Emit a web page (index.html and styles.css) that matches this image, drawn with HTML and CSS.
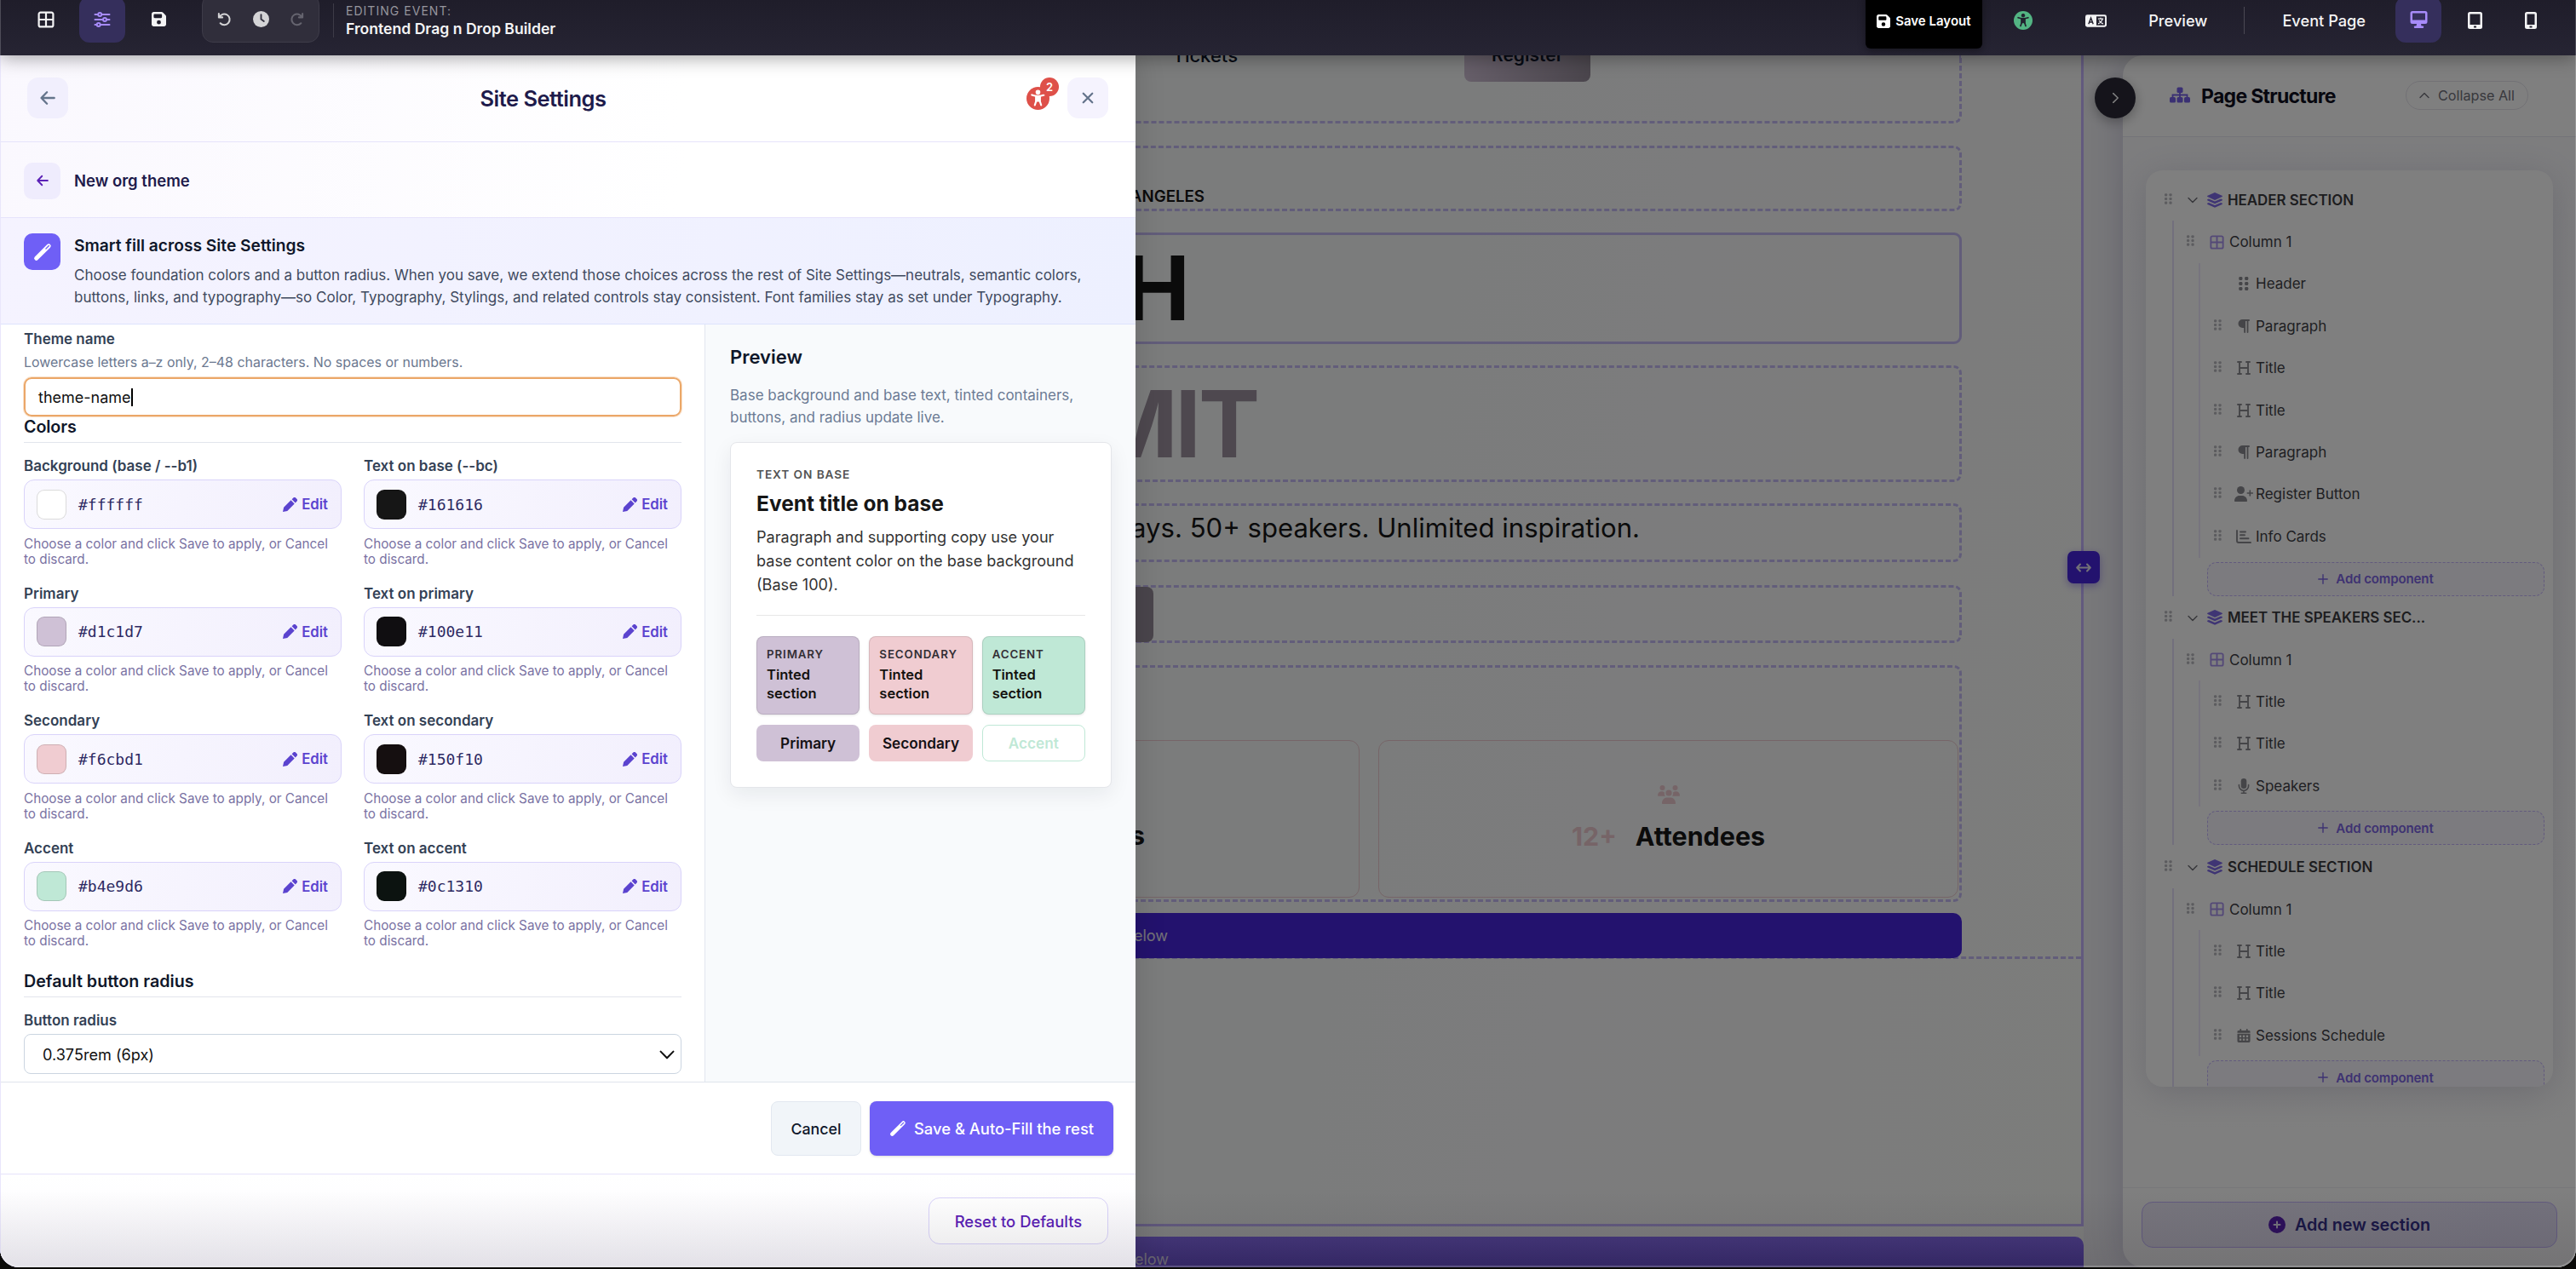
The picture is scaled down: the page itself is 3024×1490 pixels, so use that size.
FILE: index.html
```
<!doctype html>
<html lang="en">
<head>
	<meta charset="UTF-8" />
	<title>Frontend Drag n Drop Builder</title>
	<link rel="stylesheet" href="styles.css">
</head>
<body>
	<!--icons-->
	<svg class="sprite" xmlns="http://www.w3.org/2000/svg">
		<symbol id="i-grid" viewBox="0 0 20 20"><path fill="none" stroke="currentColor" stroke-width="2.2" d="M3.6 1.6h12.8a2 2 0 0 1 2 2v12.8a2 2 0 0 1-2 2H3.6a2 2 0 0 1-2-2V3.600a2 2 0 0 1 2-2zM10 2v16M2 10h16"/></symbol>
		<symbol id="i-sliders" viewBox="0 0 20 20"><g fill="none" stroke="currentColor" stroke-width="2" stroke-linecap="round"><path d="M1.500 4h3.500M9.500 4h9M1.500 10h8.500M15.500 10h3M1.500 16h2M8 16h10.500"/><circle cx="7.200" cy="4" r="2"/><circle cx="13" cy="10" r="2"/><circle cx="5.700" cy="16" r="2"/></g></symbol>
		<symbol id="i-save" viewBox="0 32 448 448"><path fill="currentColor" d="M64 32C28.700 32 0 60.700 0 96v320c0 35.300 28.700 64 64 64h320c35.300 0 64-28.700 64-64V173.300c0-17-6.700-33.300-18.700-45.300L352 50.700C340 38.700 323.700 32 306.700 32H64zm0 96c0-17.700 14.300-32 32-32h192c17.700 0 32 14.300 32 32v64c0 17.700-14.300 32-32 32H96c-17.700 0-32-14.300-32-32v-64zm160 160a64 64 0 1 1 0 128 64 64 0 1 1 0-128z"/></symbol>
		<symbol id="i-undo" viewBox="0 0 20 20"><path fill="none" stroke="currentColor" stroke-width="2.400" stroke-linecap="round" stroke-linejoin="round" d="M2.200 2.500v5h5M3 7a7.500 7.500 0 1 1 1.300 8.600"/></symbol>
		<symbol id="i-clock" viewBox="0 0 20 20"><circle cx="10" cy="10" r="10" fill="currentColor"/><path fill="none" stroke="#33323f" stroke-width="2" stroke-linecap="round" d="M10 4.500V10l3.500 2.600"/></symbol>
		<symbol id="i-back" viewBox="0 0 20 20"><path fill="none" stroke="currentColor" stroke-width="2.600" stroke-linecap="round" stroke-linejoin="round" d="M18.500 10H2M9 2.500L1.700 10 9 17.500"/></symbol>
		<symbol id="i-x" viewBox="0 0 20 20"><path fill="none" stroke="currentColor" stroke-width="3.200" stroke-linecap="round" d="M2.500 2.500l15 15M17.500 2.500l-15 15"/></symbol>
		<symbol id="i-access" viewBox="0 0 24 24"><circle cx="12" cy="12" r="12" fill="currentColor"/><g class="man"><circle cx="12" cy="5.600" r="2"/><path d="M5.600 8.400c4 1.500 8.800 1.500 12.800 0M12 10v4M10.200 10v4.500L8.700 19M13.800 10v4.500l1.500 4.500" fill="none" stroke-width="1.900" stroke-linecap="round"/><path d="M9.600 9.500h4.800v5.500H9.600z"/></g></symbol>
		<symbol id="i-wand" viewBox="0 0 24 24"><path fill="none" stroke="currentColor" stroke-width="5.500" stroke-linecap="round" d="M4 20L19.800 4.200"/><path stroke="#6f5ff6" stroke-width="1.400" stroke-linecap="round" d="M16.300 7.700l3.800-3.800"/></symbol>
		<symbol id="i-pencil" viewBox="0 0 20 20"><path fill="currentColor" d="M0 20l1.300-6.200L11.200 3.900l4.900 4.900L6.200 18.700zM12.400 2.700l1.900-1.900a2.600 2.600 0 0 1 3.700 0l1.200 1.200a2.600 2.600 0 0 1 0 3.700l-1.900 1.900z"/></symbol>
		<symbol id="i-down" viewBox="0 0 20 12"><path fill="none" stroke="currentColor" stroke-width="2.300" stroke-linecap="round" stroke-linejoin="round" d="M1.700 1.700L10 10.200l8.300-8.500"/></symbol>
		<symbol id="i-lang" viewBox="0 0 26 15"><rect width="26" height="15" rx="2.500" fill="currentColor"/><path fill="#24222f" d="M13.500 2h9.500a1 1 0 0 1 1 1v9a1 1 0 0 1-1 1h-9.500z"/><path fill="none" stroke="#24222f" stroke-width="1.500" d="M4 11.500L6.800 4l2.800 7.500M5 9h3.600"/><path fill="none" stroke="currentColor" stroke-width="1.300" d="M15.500 5h6.500M18.700 3.500V5M21 5c-.8 3-3 5-5.300 6M16.800 7c1 2 2.800 3.500 5 4"/></symbol>
		<symbol id="i-desktop" viewBox="0 0 20 20"><path fill="currentColor" fill-rule="evenodd" d="M2.500 0h15A2.500 2.500 0 0 1 20 2.500v10a2.500 2.500 0 0 1-2.500 2.500h-5l.5 2.500h1.500a1.200 1.200 0 0 1 0 2.500h-9a1.200 1.200 0 0 1 0-2.500H7l.5-2.500h-5A2.500 2.500 0 0 1 0 12.500v-10A2.500 2.500 0 0 1 2.500 0zM2.500 2.500v8h15v-8z"/></symbol>
		<symbol id="i-tablet" viewBox="0 0 17 20"><path fill="currentColor" fill-rule="evenodd" d="M2.500 0h12A2.500 2.500 0 0 1 17 2.500v15a2.500 2.500 0 0 1-2.500 2.500h-12A2.500 2.500 0 0 1 0 17.500v-15A2.500 2.500 0 0 1 2.500 0zM2.500 2.500v12.500h12V2.500zM7 16.500v2h3v-2z"/></symbol>
		<symbol id="i-mobile" viewBox="0 0 14 20"><path fill="currentColor" fill-rule="evenodd" d="M2.500 0h9A2.500 2.500 0 0 1 14 2.500v15a2.500 2.500 0 0 1-2.500 2.500h-9A2.500 2.500 0 0 1 0 17.500v-15A2.500 2.500 0 0 1 2.500 0zM2.500 2.500v12.500h9V2.500zM5.500 16.500v2h3v-2z"/></symbol>
		<symbol id="i-sitemap" viewBox="0 0 24 18"><g fill="currentColor"><rect x="8.500" width="7" height="6.500" rx="1.600"/><rect y="11.500" width="7" height="6.500" rx="1.600"/><rect x="8.500" y="11.500" width="7" height="6.500" rx="1.600"/><rect x="17" y="11.500" width="7" height="6.500" rx="1.600"/></g><path fill="none" stroke="currentColor" stroke-width="1.800" d="M12 6v6M3.500 12V9h17v3"/></symbol>
		<symbol id="i-grip" viewBox="0 0 10 14"><g fill="currentColor"><rect width="3.600" height="3.600" rx="1.200"/><rect x="6" width="3.600" height="3.600" rx="1.200"/><rect y="5.200" width="3.600" height="3.600" rx="1.200"/><rect x="6" y="5.200" width="3.600" height="3.600" rx="1.200"/><rect y="10.400" width="3.600" height="3.600" rx="1.200"/><rect x="6" y="10.400" width="3.600" height="3.600" rx="1.200"/></g></symbol>
		<symbol id="i-layers" viewBox="0 0 18 18"><path fill="currentColor" d="M9 0l8.500 3.800c.6.300.6 1 0 1.300L9 9 .5 5.100c-.6-.3-.6-1 0-1.300zM2 7.400l7 3.200 7-3.200 1.500.7c.6.300.6 1 0 1.300L9 13.300.5 9.400c-.6-.3-.6-1 0-1.300zM2 11.900l7 3.200 7-3.200 1.500.7c.6.300.6 1 0 1.300L9 17.800.5 13.900c-.6-.3-.6-1 0-1.300z"/></symbol>
		<symbol id="i-h" viewBox="0 0 16 16"><path fill="none" stroke="currentColor" stroke-width="1.900" stroke-linecap="round" d="M1 1h4M11 1h4M1 15h4M11 15h4M3 1v14M13 1v14M3 8h10"/></symbol>
		<symbol id="i-para" viewBox="0 0 14 16"><path fill="currentColor" d="M5.500 0H13a1 1 0 0 1 0 2h-.6v13a.9.900 0 0 1-1.800 0V2H9v13a.9.900 0 0 1-1.800 0v-5H5.500a5 5 0 0 1 0-10z"/></symbol>
		<symbol id="i-user" viewBox="0 0 22 18"><g fill="currentColor"><circle cx="7.500" cy="4.500" r="4.500"/><path d="M0 17.200C0 13.500 2.800 11 6 11h3c3.300 0 6 2.500 6 6.200 0 .5-.3.800-.8.800H.8c-.5 0-.8-.3-.8-.8z"/></g><path stroke="currentColor" stroke-width="1.600" stroke-linecap="round" d="M15.300 8h6M18.300 5v6"/></symbol>
		<symbol id="i-chart" viewBox="0 0 18 16"><path fill="none" stroke="currentColor" stroke-width="1.900" stroke-linecap="round" d="M1 1v12a2 2 0 0 0 2 2h14M5 2.500h6M5 6.300h5M5 10.200h9.500"/></symbol>
		<symbol id="i-mic" viewBox="0 0 13 18"><rect x="3.200" width="6.600" height="12" rx="3.300" fill="currentColor"/><path fill="none" stroke="currentColor" stroke-width="1.600" stroke-linecap="round" d="M.9 7.500v1.200a5.600 5.600 0 0 0 11.200 0V7.500M6.500 14.500v2.600M3.800 17.200h5.400"/></symbol>
		<symbol id="i-cal" viewBox="0 0 16 17"><path fill="currentColor" fill-rule="evenodd" d="M4 0a1 1 0 0 1 1 1v1h6V1a1 1 0 0 1 2 0v1h1.500A1.500 1.500 0 0 1 16 3.500V5H0V3.500A1.500 1.500 0 0 1 1.500 2H3V1a1 1 0 0 1 1-1zM0 6h16v9.500a1.500 1.500 0 0 1-1.500 1.500h-13A1.500 1.500 0 0 1 0 15.500zM2.500 8v2.500H5V8zM6.800 8v2.500h2.500V8zM11 8v2.500h2.500V8zM2.500 12.200v2.500H5v-2.500zM6.800 12.200v2.500h2.500v-2.500zM11 12.200v2.500h2.500v-2.500z"/></symbol>
		<symbol id="i-plus" viewBox="0 0 12 12"><path stroke="currentColor" stroke-width="1.400" stroke-linecap="round" d="M6 .8v10.400M.8 6h10.400"/></symbol>
		<symbol id="i-pluscircle" viewBox="0 0 20 20"><circle cx="10" cy="10" r="10" fill="currentColor"/><path stroke="#e8e4f8" stroke-width="2" stroke-linecap="round" d="M10 6.500v7M6.500 10h7"/></symbol>
		<symbol id="i-resize" viewBox="0 0 20 12"><path fill="none" stroke="currentColor" stroke-width="2.200" stroke-linecap="round" stroke-linejoin="round" d="M1.500 6h17M5.500 1.500L1.300 6l4.200 4.500M14.500 1.500L18.700 6l-4.200 4.500"/></symbol>
		<symbol id="i-people" viewBox="0 0 26 22"><g fill="currentColor"><circle cx="5.500" cy="3" r="3"/><circle cx="20.500" cy="3" r="3"/><circle cx="13" cy="9" r="3.600"/><path d="M0 12c0-3 2-4.800 4.500-4.800 1.500 0 2.500.4 3.500 1.300-.4 1.700 0 3.200 1 4.300H.8c-.5 0-.8-.3-.8-.8zM26 12c0-3-2-4.800-4.500-4.800-1.500 0-2.500.4-3.500 1.300.4 1.700 0 3.200-1 4.300h8.200c.5 0 .8-.3.8-.8zM5 21c0-3.500 2.400-6.500 5.500-6.500h5c3 0 5.500 3 5.500 6.500 0 .6-.4 1-1 1H6c-.6 0-1-.4-1-1z"/></g></symbol>
	</svg>

	<div class="app">
		<header class="topbar">
			<div class="tool"><svg width="20" height="20"><use href="#i-grid"/></svg></div>
			<div class="tool active"><svg width="20" height="20"><use href="#i-sliders"/></svg></div>
			<div class="tool"><svg width="17" height="17"><use href="#i-save"/></svg></div>
			<div class="history">
				<svg width="17" height="17"><use href="#i-undo"/></svg>
				<svg width="19" height="19"><use href="#i-clock"/></svg>
				<svg class="redo" width="17" height="17"><use href="#i-undo"/></svg>
			</div>
			<div class="event">
				<small>EDITING EVENT:</small>
				<strong>Frontend Drag n Drop Builder</strong>
			</div>
			<div class="save-layout"><svg width="16" height="16"><use href="#i-save"/></svg>Save Layout</div>
			<svg class="ok" width="22" height="22"><use href="#i-access"/></svg>
			<svg class="lang" width="25" height="15"><use href="#i-lang"/></svg>
			<span class="link">Preview</span>
			<i class="sep"></i>
			<span class="link">Event Page</span>
			<div class="tool active desktop"><svg width="21" height="20"><use href="#i-desktop"/></svg></div>
			<svg class="tablet" width="17" height="20"><use href="#i-tablet"/></svg>
			<svg class="mobile" width="14" height="20"><use href="#i-mobile"/></svg>
		</header>

		<div class="workspace">
			<!--page canvas-->
			<main class="canvas">
				<section class="section">
					<div class="column">
						<div class="block b-nav"><span>Tickets</span><b>Register</b></div>
						<div class="block b-place">LOS ANGELES</div>
						<div class="block b-tech"><span>TECH</span></div>
						<div class="block b-summit"><span>SUMMIT</span></div>
						<div class="block b-lead"><span>3 days. 50+ speakers. Unlimited inspiration.</span></div>
						<div class="block b-btn"><i></i></div>
						<div class="block b-cards">
							<div class="info"><p>Speakers</p></div>
							<div class="info last">
								<svg width="26" height="22"><use href="#i-people"/></svg>
								<h3><em>12+</em>Attendees</h3>
							</div>
						</div>
						<div class="below">Add below</div>
					</div>
				</section>
				<div class="below wide">Add below</div>
			</main>

			<!--page structure-->
			<aside class="sidebar">
				<div class="side-head">
					<svg width="24" height="19"><use href="#i-sitemap"/></svg>
					<h2>Page Structure</h2>
					<div class="collapse"><svg width="12" height="8"><use href="#i-down"/></svg>Collapse All</div>
				</div>
				<div class="side-body">
					<div class="tree">
						<div class="row sec"><svg class="grip"><use href="#i-grip"/></svg><svg class="chev"><use href="#i-down"/></svg><svg class="ic"><use href="#i-layers"/></svg>HEADER SECTION</div>
						<div class="kids">
							<div class="row col"><svg class="grip"><use href="#i-grip"/></svg><svg class="ic"><use href="#i-grid"/></svg>Column 1</div>
							<div class="items">
								<div class="row"><svg class="grip none"></svg><svg class="ic"><use href="#i-grip"/></svg>Header</div>
								<div class="row"><svg class="grip"><use href="#i-grip"/></svg><svg class="ic"><use href="#i-para"/></svg>Paragraph</div>
								<div class="row"><svg class="grip"><use href="#i-grip"/></svg><svg class="ic"><use href="#i-h"/></svg>Title</div>
								<div class="row"><svg class="grip"><use href="#i-grip"/></svg><svg class="ic"><use href="#i-h"/></svg>Title</div>
								<div class="row"><svg class="grip"><use href="#i-grip"/></svg><svg class="ic"><use href="#i-para"/></svg>Paragraph</div>
								<div class="row"><svg class="grip"><use href="#i-grip"/></svg><svg class="ic tall"><use href="#i-user"/></svg>Register Button</div>
								<div class="row"><svg class="grip"><use href="#i-grip"/></svg><svg class="ic"><use href="#i-chart"/></svg>Info Cards</div>
							</div>
							<div class="add"><svg width="12" height="12"><use href="#i-plus"/></svg>Add component</div>
						</div>

						<div class="row sec"><svg class="grip"><use href="#i-grip"/></svg><svg class="chev"><use href="#i-down"/></svg><svg class="ic"><use href="#i-layers"/></svg>MEET THE SPEAKERS SEC...</div>
						<div class="kids">
							<div class="row col"><svg class="grip"><use href="#i-grip"/></svg><svg class="ic"><use href="#i-grid"/></svg>Column 1</div>
							<div class="items">
								<div class="row"><svg class="grip"><use href="#i-grip"/></svg><svg class="ic"><use href="#i-h"/></svg>Title</div>
								<div class="row"><svg class="grip"><use href="#i-grip"/></svg><svg class="ic"><use href="#i-h"/></svg>Title</div>
								<div class="row"><svg class="grip"><use href="#i-grip"/></svg><svg class="ic tall"><use href="#i-mic"/></svg>Speakers</div>
							</div>
							<div class="add"><svg width="12" height="12"><use href="#i-plus"/></svg>Add component</div>
						</div>

						<div class="row sec"><svg class="grip"><use href="#i-grip"/></svg><svg class="chev"><use href="#i-down"/></svg><svg class="ic"><use href="#i-layers"/></svg>SCHEDULE SECTION</div>
						<div class="kids">
							<div class="row col"><svg class="grip"><use href="#i-grip"/></svg><svg class="ic"><use href="#i-grid"/></svg>Column 1</div>
							<div class="items">
								<div class="row"><svg class="grip"><use href="#i-grip"/></svg><svg class="ic"><use href="#i-h"/></svg>Title</div>
								<div class="row"><svg class="grip"><use href="#i-grip"/></svg><svg class="ic"><use href="#i-h"/></svg>Title</div>
								<div class="row"><svg class="grip"><use href="#i-grip"/></svg><svg class="ic"><use href="#i-cal"/></svg>Sessions Schedule</div>
							</div>
							<div class="add"><svg width="12" height="12"><use href="#i-plus"/></svg>Add component</div>
						</div>
					</div>
				</div>
				<div class="side-foot">
					<div class="add-section"><svg width="20" height="20"><use href="#i-pluscircle"/></svg>Add new section</div>
				</div>
			</aside>

			<div class="resize"><svg width="18" height="11"><use href="#i-resize"/></svg></div>
			<div class="toggle"><svg width="13" height="8"><use href="#i-down"/></svg></div>
			<div class="backdrop"></div>

			<!--settings drawer-->
			<div class="drawer">
				<div class="drawer-head">
					<div class="sq"><svg width="20" height="18"><use href="#i-back"/></svg></div>
					<h1>Site Settings</h1>
					<div class="alert"><svg width="27" height="27"><use href="#i-access"/></svg><b>2</b></div>
					<div class="sq close"><svg width="14" height="14"><use href="#i-x"/></svg></div>
				</div>
				<div class="crumb">
					<div class="sq small"><svg width="16" height="14"><use href="#i-back"/></svg></div>
					<h4>New org theme</h4>
				</div>
				<div class="smart">
					<div class="sq fill"><svg width="22" height="22"><use href="#i-wand"/></svg></div>
					<div>
						<h4>Smart fill across Site Settings</h4>
						<p>Choose foundation colors and a button radius. When you save, we extend those choices across the rest of Site Settings—neutrals, semantic colors,<br>buttons, links, and typography—so Color, Typography, Stylings, and related controls stay consistent. Font families stay as set under Typography.</p>
					</div>
				</div>
				<div class="body">
					<div class="form">
						<label>Theme name</label>
						<p class="hint">Lowercase letters a–z only, 2–48 characters. No spaces or numbers.</p>
						<div class="input">theme-name<i></i></div>
						<h3 class="colors">Colors</h3>
						<div class="fields">
							<div><label>Background (base / --b1)</label><div class="pick"><i class="sw" style="background:#ffffff"></i><code>#ffffff</code><span><svg width="17" height="17"><use href="#i-pencil"/></svg>Edit</span></div><p>Choose a color and click Save to apply, or Cancel to discard.</p></div>
							<div><label>Text on base (--bc)</label><div class="pick"><i class="sw" style="background:#161616"></i><code>#161616</code><span><svg width="17" height="17"><use href="#i-pencil"/></svg>Edit</span></div><p>Choose a color and click Save to apply, or Cancel to discard.</p></div>
							<div><label>Primary</label><div class="pick"><i class="sw" style="background:#cfc1d6"></i><code>#d1c1d7</code><span><svg width="17" height="17"><use href="#i-pencil"/></svg>Edit</span></div><p>Choose a color and click Save to apply, or Cancel to discard.</p></div>
							<div><label>Text on primary</label><div class="pick"><i class="sw" style="background:#100e11"></i><code>#100e11</code><span><svg width="17" height="17"><use href="#i-pencil"/></svg>Edit</span></div><p>Choose a color and click Save to apply, or Cancel to discard.</p></div>
							<div><label>Secondary</label><div class="pick"><i class="sw" style="background:#f0ccd1"></i><code>#f6cbd1</code><span><svg width="17" height="17"><use href="#i-pencil"/></svg>Edit</span></div><p>Choose a color and click Save to apply, or Cancel to discard.</p></div>
							<div><label>Text on secondary</label><div class="pick"><i class="sw" style="background:#150f10"></i><code>#150f10</code><span><svg width="17" height="17"><use href="#i-pencil"/></svg>Edit</span></div><p>Choose a color and click Save to apply, or Cancel to discard.</p></div>
							<div><label>Accent</label><div class="pick"><i class="sw" style="background:#bfe8d6"></i><code>#b4e9d6</code><span><svg width="17" height="17"><use href="#i-pencil"/></svg>Edit</span></div><p>Choose a color and click Save to apply, or Cancel to discard.</p></div>
							<div><label>Text on accent</label><div class="pick"><i class="sw" style="background:#0c1310"></i><code>#0c1310</code><span><svg width="17" height="17"><use href="#i-pencil"/></svg>Edit</span></div><p>Choose a color and click Save to apply, or Cancel to discard.</p></div>
						</div>
						<h3 class="radius">Default button radius</h3>
						<label>Button radius</label>
						<div class="select">0.375rem (6px)<svg width="18" height="11"><use href="#i-down"/></svg></div>
					</div>
					<div class="preview">
						<h2>Preview</h2>
						<p class="desc">Base background and base text, tinted containers,<br>buttons, and radius update live.</p>
						<div class="card">
							<h6>TEXT ON BASE</h6>
							<h3>Event title on base</h3>
							<p>Paragraph and supporting copy use your<br>base content color on the base background<br>(Base 100).</p>
							<div class="tiles">
								<div class="tile primary"><h6>PRIMARY</h6>Tinted<br>section</div>
								<div class="tile secondary"><h6>SECONDARY</h6>Tinted<br>section</div>
								<div class="tile accent"><h6>ACCENT</h6>Tinted<br>section</div>
								<div class="pbtn primary">Primary</div>
								<div class="pbtn secondary">Secondary</div>
								<div class="pbtn outline">Accent</div>
							</div>
						</div>
					</div>
				</div>
				<div class="actions">
					<div class="btn cancel">Cancel</div>
					<div class="btn save"><svg width="20" height="20"><use href="#i-wand"/></svg>Save &amp; Auto-Fill the rest</div>
				</div>
				<div class="reset"><div class="btn">Reset to Defaults</div></div>
			</div>
		</div>
		<div class="shade"></div>
	</div>
</body>
</html>
```
FILE: styles.css
```
* {
    box-sizing: border-box;
    margin: 0;
    padding: 0;
}

html {
    background: #0a0a08;
}

body {
    font-family: Inter, "Liberation Sans", sans-serif;
    font-size: 17px;
    color: #0f172a;
    height: 1490px;
    overflow: hidden;
}

i, em {
    font-style: normal;
}

svg {
    flex: none;
    display: block;
}

.sprite {
    display: none;
}

.app {
    position: relative;
    height: 1488px;
    display: flex;
    flex-direction: column;
    overflow: hidden;
    border-radius: 0 0 22px 22px;
}

/* top bar */
.topbar {
    position: relative;
    z-index: 5;
    flex: none;
    height: 65px;
    padding: 0 46px 17px 27px;
    display: flex;
    align-items: center;
    color: #f4f4f5;
    background: linear-gradient(#1f1d2a, #262433);
    box-shadow: 0 2px 22px rgba(0, 0, 0, .38);
}

.tool {
    width: 54px;
    height: 54px;
    margin: -3px 12px 0 0;
    display: flex;
    align-items: center;
    justify-content: center;
    border-radius: 12px;
    flex: none;
}

.tool.active {
    background: #352f5c;
    color: #a78bfa;
}

.history {
    width: 138px;
    height: 57px;
    margin: -6px 0 0 12px;
    padding-top: 3px;
    display: flex;
    align-items: center;
    justify-content: space-between;
    padding-left: 17px;
    padding-right: 17px;
    color: #d4d4d6;
    background: #302e3b;
    border: 1px solid #3e3c49;
    border-radius: 13px;
}

.redo {
    transform: scaleX(-1);
    color: #65646f;
}

.event {
    margin-left: 16px;
    padding-left: 14px;
    border-left: 1px solid #3d3b47;
    height: 40px;
    flex: 1;
}

.event small {
    display: block;
    font-size: 14px;
    line-height: 18px;
    letter-spacing: 1.03px;
    color: #96959d;
}

.event strong {
    display: block;
    font-size: 17.6px;
    font-weight: 600;
    line-height: 24px;
}

.save-layout {
    width: 137px;
    height: 65px;
    margin-top: 1px;
    padding-top: 3px;
    display: flex;
    align-items: center;
    padding-left: 13px;
    gap: 6px;
    font-size: 15px;
    font-weight: 600;
    color: #fff;
    background: #000;
    border-radius: 6px;
    box-shadow: 0 3px 8px rgba(0, 0, 0, .35);
}

.save-layout {
    margin-top: 0;
    padding-top: 1px;
}

.ok {
    margin-left: 37px;
    color: #53b483;
}

.ok + .lang {
    margin-left: 62px;
}

.ok, .alert svg {
    fill: #22202e;
    stroke: #22202e;
}

.alert svg {
    fill: #fff;
    stroke: #fff;
}

#i-access > circle {
    stroke: none;
}

.link {
    font-size: 18.200px;
    font-weight: 500;
    margin-left: 49px;
}

.sep {
    width: 1px;
    height: 32px;
    margin: 0 -5px 0 43px;
    background: #4a4853;
}

.desktop {
    margin: -3px 31px 0 35px;
}

.mobile {
    margin-left: 50px;
}

/* workspace */
.workspace {
    position: relative;
    flex: 1;
    min-height: 0;
    display: flex;
    background: #f0f0f4;
}

.canvas {
    width: 2446px;
    flex: none;
    background: linear-gradient(100deg, #f6f8f8 55%, #f8f8fa 75%, #f9faf7);
    overflow: hidden;
}

.section {
    height: 1375px;
    border: solid #c4b5fd;
    border-width: 0 3px 3px 0;
}

.column {
    height: 1061px;
    padding-right: 140px;
    border-bottom: 3px dashed #c4bbf5;
}

.block {
    margin-bottom: 25px;
    border: 3px dashed #c4bbf5;
    border-radius: 9px;
    display: flex;
    width: 2303px;
}

.b-nav {
    height: 80px;
    margin-bottom: 26px;
    border-top: 0;
    border-radius: 0 0 9px 9px;
}

.b-nav span {
    width: 1450px;
    text-align: right;
    font-size: 22px;
    font-weight: 500;
    line-height: 1;
    margin-top: -11px;
}

.b-nav b {
    width: 148px;
    height: 60px;
    margin: -29px 0 0 266px;
    padding-top: 16px;
    text-align: center;
    font-size: 21px;
    line-height: 26px;
    font-weight: 600;
    border-radius: 8px;
    background: linear-gradient(100deg, #d1c1d7, #948a98);
}

.b-place {
    height: 77px;
    padding-top: 45px;
    padding-right: 886px;
    justify-content: flex-end;
    font-size: 18.700px;
    line-height: 24px;
    font-weight: 600;
    color: #161616;
}

.b-tech, .b-summit {
    height: 131px;
    border-style: solid;
    justify-content: flex-end;
    padding-right: 903px;
    font-size: 104px;
    line-height: 124px;
    font-weight: 700;
    color: #161616;
}

.b-summit {
    height: 137px;
    border-style: dashed;
    padding-right: 824px;
    font-size: 108px;
    line-height: 132px;
    letter-spacing: -3px;
    color: #9c919f;
}

.b-lead {
    height: 69px;
    margin-bottom: 27px;
    padding-right: 375px;
    justify-content: flex-end;
    font-size: 31.100px;
    line-height: 53px;
    color: #161616;
}

.b-btn {
    height: 68px;
    margin-bottom: 26px;
}

.b-btn i {
    width: 220px;
    height: 65px;
    margin: -1px 0 0 1131px;
    border-radius: 8px;
    background: #948a98;
}

.b-cards {
    height: 278px;
    margin-bottom: 13px;
    padding: 85px 1px 2px 0;
    gap: 22px;
    justify-content: flex-end;
}

.info {
    width: 681px;
    border: 1px solid #eccbd0;
    border-radius: 12px;
}

.info p {
    width: 428px;
    margin-top: 93px;
    text-align: right;
    font-size: 30.400px;
    font-weight: 700;
    color: #161616;
}

.info.last {
    padding-top: 52px;
}

.info svg {
    margin: 0 auto;
    color: #edc9ce;
}

.info h3 {
    margin-top: 18px;
    text-align: center;
    font-size: 30.400px;
    font-weight: 700;
    line-height: 40px;
    color: #161616;
}

.info em {
    margin-right: 22px;
    color: #edc9ce;
}

.below {
    width: 2303px;
    height: 53px;
    padding-right: 932px;
    text-align: right;
    font-size: 18px;
    line-height: 53px;
    color: #e5e3ef;
    background: #4725dc;
    border-radius: 10px;
}

.wide {
    width: 2446px;
    margin-top: 12px;
    padding-right: 1074px;
    color: #ddd8ec;
    background: linear-gradient(#8a6ff5 0, #7359dd 30px);
}

/* page structure */
.sidebar {
    width: 532px;
    margin-left: 46px;
    display: flex;
    flex-direction: column;
    background: #fff;
    border-radius: 24px 0 0 24px;
    box-shadow: 0 0 36px rgba(70, 55, 130, .22);
}

.side-head {
    height: 96px;
    padding: 1px 56px 3px 55px;
    display: flex;
    align-items: center;
    border-bottom: 1px solid #e9e6f2;
    color: #7460e6;
}

.side-head h2 {
    margin: 2px 0 0 13px;
    flex: 1;
    font-size: 23px;
    letter-spacing: -.7px;
    font-weight: 700;
    color: #0f0f1e;
}

.collapse {
    height: 34px;
    width: 144px;
    display: flex;
    align-items: center;
    justify-content: center;
    gap: 10px;
    font-size: 16.200px;
    color: #71717a;
    border: 1px solid #e4e2ea;
    border-radius: 17px;
}

.collapse svg {
    transform: rotate(180deg);
}

.side-body {
    flex: 1;
    min-height: 0;
    padding: 39px 27px 0 27px;
    background: linear-gradient(#fafafd, #fff);
}

.tree {
    height: 1076px;
    padding: 10px 10px 0 0;
    overflow: hidden;
    background: #fff;
    border-radius: 20px;
    box-shadow: 0 8px 40px rgba(50, 40, 90, .17);
}

.row {
    height: 49.400px;
    display: flex;
    align-items: center;
    padding-left: 16px;
    font-size: 17px;
    color: #3f3f46;
}

.row.sec {
    padding-left: 22px;
    font-size: 16.900px;
    font-weight: 600;
    color: #3a3a3e;
}

.row.col {
    padding-left: 15px;
}

.grip {
    width: 9px;
    height: 13px;
    margin-top: -3px;
    color: #b9b9be;
}

.grip.none {
    visibility: hidden;
}

.chev {
    width: 12px;
    height: 8px;
    margin: 1px 11px 0 18px;
    color: #6f6f76;
}

.ic {
    width: 22px;
    height: 16px;
    margin: 0 3px 0 15px;
    color: #8b8b90;
}

.ic.tall {
    height: 18px;
}

.sec .ic {
    width: 18px;
    height: 18px;
    margin: 0 6px 0 0;
    color: #7f6ae8;
}

.col .ic {
    width: 17px;
    height: 17px;
    margin: 0 6px 0 18px;
    color: #a893ee;
}

.kids {
    margin-left: 31px;
    margin-bottom: 1px;
    border-left: 2px solid #e5dffa;
}

.items {
    margin-left: 29px;
    border-left: 2px solid #eee9fc;
}

.add {
    height: 40px;
    margin: 5px 0 0 39px;
    display: flex;
    align-items: center;
    justify-content: center;
    gap: 9px;
    font-size: 15px;
    letter-spacing: -.1px;
    font-weight: 600;
    color: #7c65e4;
    background: #f8f6fe;
    border: 1px dashed #c4b5fd;
    border-radius: 11px;
}

.side-foot {
    height: 94px;
    padding: 16px 22px 0 22px;
    border-top: 1px solid #f0eef5;
}

.add-section {
    height: 54px;
    display: flex;
    align-items: center;
    justify-content: center;
    gap: 11px;
    font-size: 19.800px;
    font-weight: 600;
    color: #35308a;
    background: linear-gradient(90deg, #eeebfb, #e8e4fb);
    border: 1px solid #c4b5fd;
    border-radius: 13px;
}

.add-section svg {
    color: #5b21b6;
}

.resize {
    position: absolute;
    left: 2427px;
    top: 582px;
    width: 38px;
    height: 38px;
    display: flex;
    align-items: center;
    justify-content: center;
    color: #e5e3ef;
    background: #4725dc;
    border-radius: 7px;
    box-shadow: 0 3px 10px rgba(71, 37, 220, .4);
}

.toggle {
    position: absolute;
    left: 2459px;
    top: 26px;
    width: 48px;
    height: 48px;
    display: flex;
    align-items: center;
    justify-content: center;
    color: #fff;
    background: #2a2937;
    border-radius: 50%;
    box-shadow: 0 4px 14px rgba(0, 0, 0, .3);
}

.toggle svg {
    transform: rotate(-90deg);
}

.backdrop {
    position: absolute;
    inset: 0;
    background: rgba(0, 0, 0, .5);
}

/* drawer */
.drawer {
    position: absolute;
    left: 0;
    top: 0;
    bottom: 0;
    width: 1333px;
    display: flex;
    flex-direction: column;
    background: #fff;
    border-left: 1px solid #e4e0fb;
    box-shadow: 4px 0 30px rgba(0, 0, 0, .12);
}

.drawer-head {
    height: 102px;
    padding: 0 32px 1px 31px;
    display: flex;
    align-items: center;
    background: linear-gradient(100deg, #faf8fe, #fff 60%);
    border-bottom: 1px solid #e6e3fb;
}

.drawer-head h1 {
    flex: 1;
    padding-right: 10px;
    text-align: center;
    font-size: 25.500px;
    letter-spacing: -.5px;
    font-weight: 600;
    color: #1e1b4b;
}

.sq {
    width: 48px;
    height: 48px;
    flex: none;
    display: flex;
    align-items: center;
    justify-content: center;
    color: #64748b;
    background: #f1effd;
    border-radius: 13px;
}

.close {
    margin-left: 21px;
    background: #f5f3fe;
}

.alert {
    position: relative;
    color: #de5049;
}

.alert b {
    position: absolute;
    left: 16px;
    top: -11px;
    width: 22px;
    height: 22px;
    text-align: center;
    font-size: 13px;
    line-height: 22px;
    font-weight: 600;
    color: #fff;
    background: #de5049;
    border-radius: 50%;
}

.crumb {
    height: 89px;
    padding: 2px 27px 0;
    display: flex;
    align-items: center;
    gap: 16px;
    background: linear-gradient(100deg, #faf8fe, #fff 60%);
    border-bottom: 1px solid #e6e3fb;
}

h4 {
    font-size: 18.500px;
    line-height: 26px;
    font-weight: 600;
}

.crumb h4 {
    color: #1e1b4b;
}

.small, .fill {
    width: 43px;
    height: 43px;
    border-radius: 10px;
    color: #5b21b6;
    background: #efecfd;
}

.smart {
    height: 125px;
    padding: 18px 27px 0;
    display: flex;
    gap: 16px;
    background: linear-gradient(100deg, #f5f3ff, #edf0ff);
    border-bottom: 1px solid #dde3fd;
}

.fill {
    color: #fff;
    background: #6f5ff6;
}

.smart h4 {
    margin-top: -4px;
    line-height: 37px;
    height: 40px;
    font-size: 19.200px;
}

.smart p {
    line-height: 26px;
    white-space: nowrap;
    color: #3f4a5e;
}

.body {
    height: 889px;
    display: flex;
}

.form {
    width: 827px;
    padding: 6px 27px 0;
    border-right: 1px solid #e2e6ef;
}

label {
    display: block;
    font-size: 17px;
    line-height: 22px;
    font-weight: 600;
    color: #334155;
}

.hint {
    margin: 7px 0 7px;
    font-size: 15.950px;
    line-height: 20px;
    color: #6b7890;
}

.input {
    height: 46px;
    padding-left: 15px;
    display: flex;
    align-items: center;
    font-size: 18px;
    color: #111;
    border: 2px solid #eba768;
    border-radius: 9px;
    box-shadow: 0 0 0 1px #f9e0c9;
}

.input i {
    width: 2px;
    height: 21px;
    background: #000;
}

.form h3 {
    height: 31px;
    font-size: 19.700px;
    line-height: 25px;
    font-weight: 600;
    border-bottom: 1px solid #e2e5ec;
}

.colors {
    margin-bottom: 16px;
    letter-spacing: -.1px;
}

.radius {
    margin: 26px 0 16px;
}

.fields {
    display: grid;
    grid-template-columns: 1fr 1fr;
    column-gap: 26px;
    row-gap: 20px;
}

.pick {
    height: 58px;
    margin: 5px 0 8.500px;
    padding: 0 15px 0 14px;
    display: flex;
    align-items: center;
    background: linear-gradient(100deg, #faf9ff, #f2effd);
    border: 1px solid #d9d3fa;
    border-radius: 12px;
}

.sw {
    width: 35px;
    height: 35px;
    border: 1px solid rgba(0, 0, 0, .14);
    border-radius: 9px;
}

.pick code {
    flex: 1;
    margin-left: 14px;
    font-family: "DejaVu Sans Mono", monospace;
    font-size: 18px;
    color: #2e2a63;
}

.pick span {
    display: flex;
    align-items: center;
    gap: 5px;
    font-size: 16.700px;
    font-weight: 600;
    color: #5b43cf;
}

.fields p {
    font-size: 15.270px;
    line-height: 18px;
    color: #7a72a3;
}

.select {
    height: 47px;
    margin-top: 5px;
    padding: 1px 7px 0 21px;
    display: flex;
    align-items: center;
    justify-content: space-between;
    font-size: 18.100px;
    color: #111;
    border: 1px solid #cbd5e1;
    border-radius: 8px;
}

.preview {
    flex: 1;
    padding: 24px 28px 0 29px;
    background: #f8fafc;
}

.preview h2 {
    font-size: 22px;
    line-height: 28px;
    font-weight: 600;
}

.desc {
    margin: 18px 0 16px;
    line-height: 26px;
    color: #6b7a94;
}

.card {
    height: 406px;
    padding: 27px 30px 0;
    background: #fff;
    border: 1px solid #e4e6ea;
    border-radius: 8px;
    box-shadow: 0 8px 24px rgba(15, 23, 42, .07);
}

h6 {
    font-size: 13.700px;
    line-height: 20px;
    font-weight: 600;
    letter-spacing: .9px;
    color: #545454;
}

.card h3 {
    margin: 8px 0 9px;
    font-size: 24.500px;
    line-height: 32px;
    font-weight: 700;
    color: #161616;
}

.card p {
    padding-bottom: 22px;
    font-size: 18.100px;
    line-height: 28px;
    white-space: nowrap;
    color: #333;
    border-bottom: 1px solid #e7e7e7;
}

.tiles {
    margin-top: 24px;
    display: grid;
    grid-template-columns: 1fr 1fr 1fr;
    gap: 12px 11px;
}

.tile {
    height: 92px;
    padding: 11px;
    font-size: 16.500px;
    line-height: 22px;
    font-weight: 600;
    color: #14120f;
    border: 1px solid rgba(0, 0, 0, .1);
    border-radius: 8px;
    box-shadow: 0 1px 3px rgba(0, 0, 0, .1);
}

.tile h6 {
    margin-bottom: 4px;
    font-size: 13.300px;
    line-height: 18px;
    color: #332f35;
}

.primary {
    background: #cfc1d6;
}

.secondary {
    background: #f0ccd1;
}

.accent {
    background: #bfe8d6;
}

.pbtn {
    height: 43px;
    text-align: center;
    font-size: 17.200px;
    line-height: 43px;
    font-weight: 600;
    color: #141114;
    border-radius: 8px;
}

.outline {
    line-height: 41px;
    color: #bfe8d6;
    border: 1px solid #bfe8d6;
}

.actions {
    height: 108px;
    padding: 22px 26px 0;
    display: flex;
    justify-content: flex-end;
    gap: 10px;
    border-top: 1px solid #dfe4ec;
}

.btn {
    height: 64px;
    padding: 0 22px;
    display: flex;
    align-items: center;
    justify-content: center;
    gap: 9px;
    font-size: 18.400px;
    font-weight: 500;
    border-radius: 8px;
}

.cancel {
    width: 106px;
    font-size: 17.800px;
    background: #f1f5f9;
    border: 1px solid #e2e8f0;
}

.save {
    width: 286px;
    color: #fff;
    background: #6f5ff6;
    box-shadow: 0 1px 3px rgba(0, 0, 0, .15);
}

.reset {
    flex: 1;
    padding: 27px 32px 0;
    display: flex;
    justify-content: flex-end;
    border-top: 1px solid #e6e3fb;
    background: linear-gradient(#fff, #faf9fe);
}

.reset .btn {
    width: 211px;
    height: 55px;
    color: #5b21b6;
    background: #fff;
    border: 1px solid #d9d3fa;
    border-radius: 13px;
}

/* soft shade along the bottom edge */
.shade {
    position: absolute;
    z-index: 9;
    inset: 0;
    pointer-events: none;
    border-radius: 0 0 22px 22px;
    background: linear-gradient(rgba(20, 10, 30, 0), rgba(20, 10, 30, .1)) bottom / 100% 90px no-repeat;
    box-shadow: inset 0 -1px 0 1px rgba(255, 255, 255, .2);
}
```
